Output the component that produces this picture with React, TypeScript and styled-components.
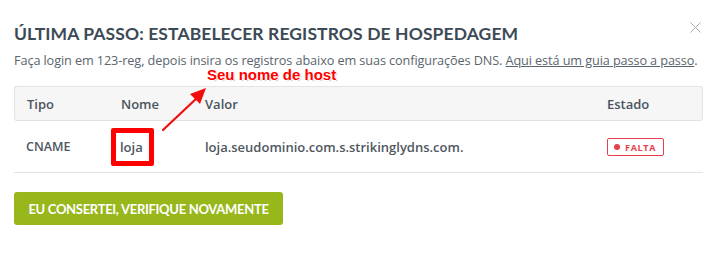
import React from 'react';
import styled, { createGlobalStyle } from 'styled-components';

const GlobalStyle = createGlobalStyle`
  html, body {
    margin: 0;
    padding: 0;
    background: #ffffff;
  }
  * {
    box-sizing: border-box;
  }
`;

const records = [
  { tipo: 'CNAME', nome: 'loja', valor: 'loja.seudominio.com.s.strikinglydns.com.', estado: 'FALTA' },
];

export default function App() {
  return (
    <>
      <GlobalStyle />
      <Modal>
        <CloseButton aria-label="Fechar">
          <svg width="11" height="11" viewBox="0 0 11 11">
            <path d="M0.5 0.5 L10.5 10.5 M10.5 0.5 L0.5 10.5" stroke="#a9a9a9" strokeWidth="1" />
          </svg>
        </CloseButton>
        <Title>Última passo: estabelecer registros de hospedagem</Title>
        <Description>
          Faça login em 123-reg, depois insira os registros abaixo em suas configurações DNS.{' '}
          <GuideLink href="#">Aqui está um guia passo a passo</GuideLink>.
        </Description>

        <TableWrap>
          <Table>
            <thead>
              <HeadRow>
                <HeadCell $width={95}>Tipo</HeadCell>
                <HeadCell $width={84}>Nome</HeadCell>
                <HeadCell>Valor</HeadCell>
                <HeadCell $width={108}>Estado</HeadCell>
              </HeadRow>
            </thead>
            <tbody>
              {records.map((r) => (
                <BodyRow key={r.nome}>
                  <Cell>{r.tipo}</Cell>
                  <NameCell>
                    <Highlight>{r.nome}</Highlight>
                  </NameCell>
                  <ValueCell>{r.valor}</ValueCell>
                  <Cell>
                    <StatusBadge>
                      <Dot />
                      {r.estado}
                    </StatusBadge>
                  </Cell>
                </BodyRow>
              ))}
            </tbody>
          </Table>

          <Annotation>Seu nome de host</Annotation>
          <Arrow width="50" height="48" viewBox="0 0 50 48">
            <path d="M3 45 L38 12" stroke="#f20d0d" strokeWidth="2.2" strokeLinecap="round" />
            <path d="M46 3 L30 9 L40 19 Z" fill="#f20d0d" />
          </Arrow>
        </TableWrap>

        <VerifyButton>Eu consertei, verifique novamente</VerifyButton>
      </Modal>
    </>
  );
}

const Modal = styled.div`
  position: relative;
  width: 727px;
  height: 263px;
  padding: 24px 24px 0 14px;
  background: #ffffff;
`;

const CloseButton = styled.button`
  position: absolute;
  top: 22px;
  right: 26px;
  padding: 0;
  border: none;
  background: none;
  display: flex;
  cursor: pointer;
`;

const Title = styled.h2`
  margin: 0;
  font-family: Lato, 'Open Sans', sans-serif;
  font-weight: 700;
  font-size: 17.5px;
  line-height: 20px;
  letter-spacing: 0.1px;
  text-transform: uppercase;
  color: #3c4a55;
`;

const Description = styled.p`
  margin: 7px 0 0;
  font-family: 'Open Sans', sans-serif;
  font-size: 12.7px;
  line-height: 18px;
  letter-spacing: -0.1px;
  white-space: nowrap;
  color: #5b656d;
`;

const GuideLink = styled.a`
  color: #5b656d;
  text-decoration: underline;
`;

const TableWrap = styled.div`
  position: relative;
  margin-top: 17px;
  width: 689px;
`;

const Table = styled.table`
  width: 100%;
  border-collapse: separate;
  border-spacing: 0;
  font-family: 'Open Sans', sans-serif;
`;

const HeadRow = styled.tr`
  background: #f6f6f6;
`;

const HeadCell = styled.th<{ $width?: number }>`
  ${({ $width }) => ($width ? `width: ${$width}px;` : '')}
  height: 35px;
  padding: 0 0 0 12px;
  text-align: left;
  font-size: 13px;
  font-weight: 600;
  color: #4a545e;
  border-top: 1px solid #e3e3e3;
  border-bottom: 1px solid #e3e3e3;

  &:first-child {
    border-left: 1px solid #e3e3e3;
    border-radius: 3px 0 0 3px;
  }
  &:last-child {
    border-right: 1px solid #e3e3e3;
    border-radius: 0 3px 3px 0;
  }
`;

const BodyRow = styled.tr``;

const Cell = styled.td`
  height: 52px;
  padding: 0 0 0 12px;
  font-size: 12.5px;
  font-weight: 600;
  color: #4f575f;
  border-bottom: 1px solid #e3e3e3;
`;

const NameCell = styled(Cell)`
  padding-left: 0;
`;

const ValueCell = styled(Cell)`
  font-size: 13px;
`;

const Highlight = styled.span`
  display: inline-flex;
  align-items: center;
  height: 38px;
  margin-left: 2px;
  padding: 0 6px 0 4px;
  border: 5px solid #ff0000;
  border-radius: 2px;
  font-size: 13px;
`;

const StatusBadge = styled.span`
  display: inline-flex;
  align-items: center;
  gap: 5px;
  height: 18px;
  padding: 0 7px 0 6px;
  border: 1px solid #e4414d;
  border-radius: 2px;
  font-size: 9px;
  font-weight: 700;
  letter-spacing: 0.7px;
  color: #e4414d;
`;

const Dot = styled.span`
  width: 6px;
  height: 6px;
  border-radius: 50%;
  background: #e4414d;
`;

const Annotation = styled.span`
  position: absolute;
  left: 193px;
  top: -20px;
  font-family: 'Liberation Sans', Arial, sans-serif;
  font-weight: 700;
  font-size: 15px;
  line-height: 17px;
  color: #ff0000;
  white-space: nowrap;
  text-shadow:
    1px 0 0 #fff, -1px 0 0 #fff, 0 1px 0 #fff, 0 -1px 0 #fff,
    1px 1px 1px rgba(0, 0, 0, 0.35);
`;

const Arrow = styled.svg`
  position: absolute;
  left: 146px;
  top: -1px;
`;

const VerifyButton = styled.button`
  display: block;
  margin-top: 19px;
  width: 269px;
  height: 33px;
  border: none;
  border-radius: 3px;
  background: #97b71b;
  font-family: Lato, 'Open Sans', sans-serif;
  font-weight: 700;
  font-size: 13px;
  letter-spacing: -0.3px;
  text-transform: uppercase;
  color: #ffffff;
  cursor: pointer;
`;
